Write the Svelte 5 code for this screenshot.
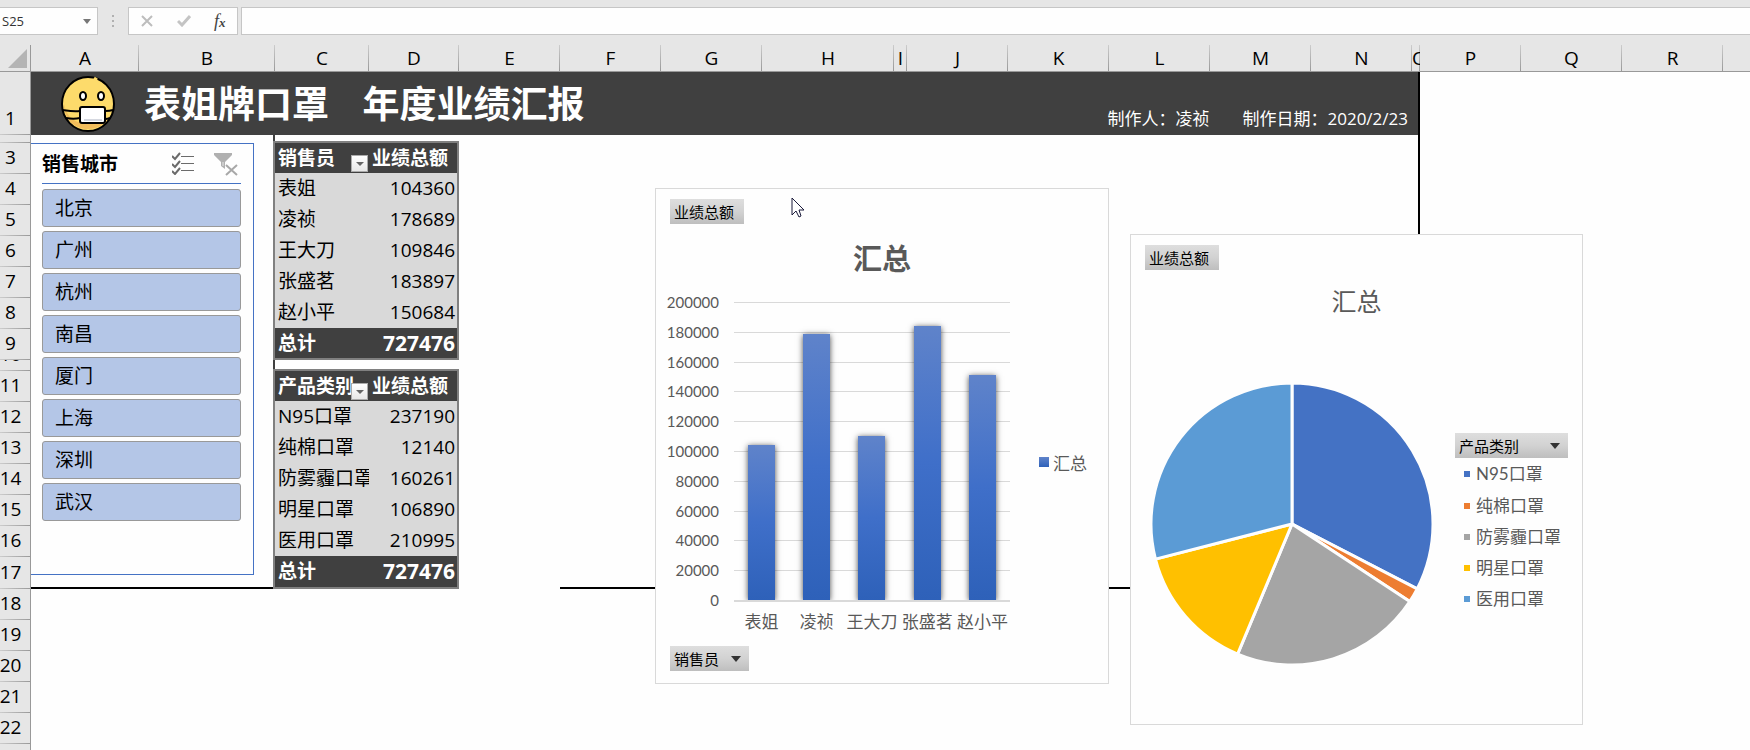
<script lang="ts">
  type Column = { name: string; width: string };
  type Row = { label: string; value: number };
  type Pivot = { id: string; field: string; rows: Row[] };

  const columns: Column[] = [
    { name: 'A', width: '108px' },
    { name: 'B', width: '136px' },
    { name: 'C', width: '94px' },
    { name: 'D', width: '90px' },
    { name: 'E', width: '101px' },
    { name: 'F', width: '101px' },
    { name: 'G', width: '101px' },
    { name: 'H', width: '132px' },
    { name: 'I', width: '13px' },
    { name: 'J', width: '101px' },
    { name: 'K', width: '101px' },
    { name: 'L', width: '101px' },
    { name: 'M', width: '101px' },
    { name: 'N', width: '101px' },
    { name: 'O', width: '8px' },
    { name: 'P', width: '101px' },
    { name: 'Q', width: '101px' },
    { name: 'R', width: '101px' },
    { name: '', width: 'minmax(0, 1fr)' }
  ];

  const rowHeights: Record<number, number> = { 1: 63, 2: 8, 10: 11, 17: 32 };
  const rowNumbers = Array.from({ length: 23 }, (_, i) => i + 1);

  const gridColumns = '31px ' + columns.map((c) => c.width).join(' ');
  const gridRows = '27px ' + rowNumbers.map((n) => `${rowHeights[n] ?? 31}px`).join(' ');

  const cities = ['北京', '广州', '杭州', '南昌', '厦门', '上海', '深圳', '武汉'];

  const sales: Row[] = [
    { label: '表姐', value: 104360 },
    { label: '凌祯', value: 178689 },
    { label: '王大刀', value: 109846 },
    { label: '张盛茗', value: 183897 },
    { label: '赵小平', value: 150684 }
  ];

  const products: Row[] = [
    { label: 'N95口罩', value: 237190 },
    { label: '纯棉口罩', value: 12140 },
    { label: '防雾霾口罩', value: 160261 },
    { label: '明星口罩', value: 106890 },
    { label: '医用口罩', value: 210995 }
  ];

  const pivots: Pivot[] = [
    { id: 'by-seller', field: '销售员', rows: sales },
    { id: 'by-product', field: '产品类别', rows: products }
  ];

  const axisMax = 200000;
  const ticks = Array.from({ length: 11 }, (_, i) => axisMax - i * 20000);

  const pieColors = ['#4472c4', '#ed7d31', '#a5a5a5', '#ffc000', '#5b9bd5'];

  let cell = $state('S25');
  let formula = $state('');
  let selected = $state<string[]>([...cities]);

  function total(rows: Row[]) {
    return rows.reduce((sum, r) => sum + r.value, 0);
  }

  function toggleCity(city: string) {
    selected = selected.includes(city) ? selected.filter((c) => c !== city) : [...selected, city];
  }

  function slices(rows: Row[], r: number) {
    const sum = total(rows);
    let start = 0;
    return rows.map((row, i) => {
      const end = start + (row.value / sum) * Math.PI * 2;
      const large = end - start > Math.PI ? 1 : 0;
      const d = `M0 0L${r * Math.sin(start)} ${-r * Math.cos(start)}A${r} ${r} 0 ${large} 1 ${r * Math.sin(end)} ${-r * Math.cos(end)}Z`;
      start = end;
      return { d, color: pieColors[i] };
    });
  }
</script>

<div class="app">
  <div class="formula-bar">
    <div class="name-box">
      <input type="text" aria-label="名称框" bind:value={cell} />
      <button aria-label="名称列表">
        <svg width="8" height="5" viewBox="0 0 8 5"><path d="M0 0h8L4 5z" fill="#777" /></svg>
      </button>
    </div>
    <svg class="grip" width="3" height="14" viewBox="0 0 3 14">
      <path d="M0 1h2v2H0zM0 6h2v2H0zM0 11h2v2H0z" fill="#b0b0b0" />
    </svg>
    <div class="formula-tools">
      <button aria-label="取消">
        <svg width="14" height="12" viewBox="0 0 14 12">
          <path d="M2 1l10 10M12 1L2 11" stroke="#bdbdbd" stroke-width="2" fill="none" />
        </svg>
      </button>
      <button aria-label="输入">
        <svg width="14" height="12" viewBox="0 0 14 12">
          <path d="M1 6l4 4 8-9" stroke="#c4c4c4" stroke-width="3" fill="none" />
        </svg>
      </button>
      <button class="fx" aria-label="插入函数"><i>f</i><sub>x</sub></button>
    </div>
    <input class="formula-input" type="text" aria-label="编辑栏" bind:value={formula} />
  </div>

  <div class="sheet" style="grid-template-columns: {gridColumns}; grid-template-rows: {gridRows}">
    <div class="corner">
      <svg width="19" height="19" viewBox="0 0 19 19"><path d="M19 0v19H0z" fill="#b4b4b4" /></svg>
    </div>
    {#each columns as col}
      <div class="col-head">{col.name}</div>
    {/each}
    {#each rowNumbers as n}
      <div class="row-head" style="grid-row: {n + 1}">{n === 2 || n === 23 ? '' : n}</div>
    {/each}

    <div class="pivot-edge"></div>
    <div class="bottom-edge left"></div>
    <div class="bottom-edge right"></div>

    <header class="banner">
      <svg class="logo" width="56" height="58" viewBox="0 0 56 58">
        <ellipse cx="28" cy="29" rx="26" ry="27" fill="#fddb6b" stroke="#000" stroke-width="2" />
        <path d="M4 29c0 15 10 25 24 25 9 0 17-4 21-12-5 5-11 7-19 7C15 49 7 43 4 29z" fill="#f2bd5c" />
        <path d="M3 35c6 1 11 2 17 1M53 35c-3 1-4 1-8 1M6 43c6 1 9 1 14 0M50 43c-2 1-3 1-5 1" stroke="#000" stroke-width="2" fill="none" />
        <rect x="20" y="32" width="25" height="16" rx="2" fill="#fff" stroke="#000" stroke-width="2" />
        <path d="M24 45h18" stroke="#d5d8e0" stroke-width="2" />
        <ellipse cx="23" cy="21" rx="3" ry="4" fill="#fff" stroke="#000" stroke-width="2" />
        <ellipse cx="41" cy="21" rx="3" ry="4" fill="#fff" stroke="#000" stroke-width="2" />
        <path d="M34 3l3 2" stroke="#fddb6b" stroke-width="3" />
      </svg>
      <h1>表姐牌口罩    年度业绩汇报</h1>
      <p><span>制作人：凌祯</span><span>制作日期：2020/2/23</span></p>
    </header>

    {#each pivots as pivot}
      <div class="pivot {pivot.id}">
        <table>
          <thead>
            <tr>
              <th scope="col">
                {pivot.field}
                <button class="filter" aria-label="筛选{pivot.field}">
                  <svg width="8" height="4" viewBox="0 0 8 4"><path d="M0 0h8L4 4z" fill="#666" /></svg>
                </button>
              </th>
              <th scope="col">业绩总额</th>
            </tr>
          </thead>
          <tbody>
            {#each pivot.rows as row}
              <tr>
                <td>{row.label}</td>
                <td class="num">{row.value}</td>
              </tr>
            {/each}
          </tbody>
          <tfoot>
            <tr>
              <td>总计</td>
              <td class="num">{total(pivot.rows)}</td>
            </tr>
          </tfoot>
        </table>
      </div>
    {/each}

    <section class="slicer">
      <div class="slicer-head">
        <h2>销售城市</h2>
        <button aria-label="多选">
          <svg width="22" height="23" viewBox="0 0 22 23" fill="none">
            <path d="M0 4l3 3 5-6M0 12l3 3 5-6M0 19l3 3 5-6" stroke="#6b6b6b" stroke-width="2" />
            <path d="M9 4.500h13M9 11.500h13M9 18.500h13" stroke="#6b6b6b" />
          </svg>
        </button>
        <button aria-label="清除筛选器" onclick={() => (selected = [...cities])}>
          <svg width="24" height="24" viewBox="0 0 24 24">
            <path d="M0 1h18v2l-7 7v7l-4-3v-4L0 3z" fill="#b0b0b0" />
            <path d="M9 10v4" stroke="#e8e8e8" stroke-width="1" />
            <path d="M12 13l11 10M23 13L12 23" stroke="#a8a8a8" stroke-width="2" />
          </svg>
        </button>
      </div>
      <div class="slicer-items">
        {#each cities as city}
          <button
            class:off={!selected.includes(city)}
            aria-pressed={selected.includes(city)}
            onclick={() => toggleCity(city)}
          >{city}</button>
        {/each}
      </div>
    </section>

    <section class="chart bar-chart">
      <button class="field">业绩总额</button>
      <h2>汇总</h2>
      <div class="bar-body">
        <div class="y-axis">
          {#each ticks as tick}
            <span>{tick}</span>
          {/each}
        </div>
        <div class="plot">
          <div class="plot-area">
            <div class="gridlines">
              {#each ticks as _}
                <div></div>
              {/each}
            </div>
            <div class="bars">
              {#each sales as s}
                <div class="bar" style="height: {(s.value / axisMax) * 100}%"></div>
              {/each}
            </div>
          </div>
          <div class="x-axis">
            {#each sales as s}
              <span>{s.label}</span>
            {/each}
          </div>
        </div>
        <div class="legend"><span class="swatch"></span>汇总</div>
      </div>
      <button class="field">
        销售员
        <svg width="10" height="6" viewBox="0 0 10 6"><path d="M0 0h10L5 6z" fill="#333" /></svg>
      </button>
    </section>

    <section class="chart pie-chart">
      <button class="field">业绩总额</button>
      <h2>汇总</h2>
      <div class="pie-body">
        <svg width="282" height="282" viewBox="-141 -141 282 282">
          {#each slices(products, 141) as slice}
            <path d={slice.d} fill={slice.color} stroke="#fefefe" stroke-width="3" stroke-linejoin="round" />
          {/each}
        </svg>
        <div class="pie-legend">
          <button class="field">
            产品类别
            <svg width="10" height="6" viewBox="0 0 10 6"><path d="M0 0h10L5 6z" fill="#333" /></svg>
          </button>
          <ul>
            {#each products as p, i}
              <li><span style="background: {pieColors[i]}"></span>{p.label}</li>
            {/each}
          </ul>
        </div>
      </div>
    </section>

    <svg class="pointer" width="14" height="21" viewBox="0 0 14 21">
      <path d="M1 1v17l4-4 3 6 2-1-2-6h5z" fill="#fff" stroke="#1a1a3a" />
    </svg>
  </div>
</div>

<style>
:global(body) {
  margin: 0;
  background: #fefefe;
}

.app {
  height: 100vh;
  overflow: hidden;
  display: flex;
  flex-direction: column;
  background: #fefefe;
  color: #000;
  font-family: 'Open Sans', 'Noto Sans CJK SC', sans-serif;
  font-size: 19px;
}

button,
input {
  font: inherit;
  color: inherit;
  margin: 0;
  padding: 0;
  border: none;
  background: none;
}
button { cursor: pointer; }
svg { display: block; flex: none; }
h1, h2, p, ul { margin: 0; padding: 0; }

/* formula bar */
.formula-bar {
  display: flex;
  align-items: center;
  box-sizing: border-box;
  flex: none;
  height: 45px;
  padding: 7px 0 10px;
  background: #e6e6e6;
}
.name-box,
.formula-tools,
.formula-input {
  box-sizing: border-box;
  height: 28px;
  border: 1px solid #c6c6c6;
  background: #fefefe;
}
.name-box {
  display: flex;
  align-items: center;
  width: 98px;
  border-left: none;
  font-size: 13px;
}
.name-box input {
  flex: 1;
  min-width: 0;
  padding-left: 2px;
  color: #333;
}
.name-box button { padding: 6px; }
.grip { margin: 0 13px 0 14px; }
.formula-tools {
  display: flex;
  align-items: center;
  justify-content: space-around;
  width: 110px;
  margin-right: 3px;
}
.fx {
  display: flex;
  align-items: baseline;
  font-family: 'Liberation Serif', serif;
  font-size: 18px;
  line-height: 20px;
  color: #444;
}
.fx sub {
  font-size: 13px;
  font-style: italic;
  font-weight: bold;
  line-height: 12px;
  vertical-align: baseline;
}
.formula-input {
  flex: 1;
  padding: 0 6px;
  border-right: none;
  font-size: 14px;
}

/* sheet grid */
.sheet {
  position: relative;
  display: grid;
  flex: 1;
  min-height: 0;
}
.corner,
.col-head,
.row-head {
  box-sizing: border-box;
  overflow: hidden;
  background: #e6e6e6;
}
.corner {
  display: flex;
  align-items: flex-end;
  justify-content: flex-end;
  padding: 0 3px 3px 0;
  border-right: 1px solid #999;
  border-bottom: 1px solid #999;
}
.col-head {
  display: flex;
  align-items: center;
  justify-content: safe center;
  border-bottom: 1px solid #999;
  background: linear-gradient(#ccc, #999) right / 1px 100% no-repeat #e6e6e6;
  line-height: 26px;
}
.col-head:nth-child(20) { background: #e6e6e6; }
.row-head {
  grid-column: 1;
  display: flex;
  align-items: flex-end;
  justify-content: center;
  padding: 0 9px 1px 0;
  border-right: 1px solid #999;
  background: linear-gradient(to right, #ccc, #999) bottom / 100% 1px no-repeat #e6e6e6;
  line-height: 31px;
}

.pivot-edge {
  grid-area: 3 / 3 / 19 / 4;
  border-right: 2px solid #404040;
}
.bottom-edge { border-bottom: 2px solid #000; }
.bottom-edge.left { grid-area: 18 / 2 / 19 / 4; }
.bottom-edge.right {
  grid-area: 2 / 7 / 19 / 17;
  border-right: 2px solid #000;
}

.banner {
  grid-area: 2 / 2 / 3 / 17;
  display: flex;
  align-items: center;
  margin-right: 2px;
  padding: 0 10px 0 29px;
  background: #404040;
  color: #fff;
}
.banner h1 {
  flex: 1;
  padding: 0 0 3px 28px;
  font-family: 'Noto Sans CJK SC', sans-serif;
  font-size: 37px;
  font-weight: bold;
  line-height: 60px;
  white-space: pre;
}
.banner p {
  display: flex;
  align-self: flex-end;
  gap: 33px;
  padding-bottom: 4px;
  font-size: 17px;
  line-height: 24px;
}

/* pivot tables */
.pivot {
  margin: -2px 0 0 -2px;
  border: 2px solid #808080;
  background: #404040;
  overflow: hidden;
}
.pivot.by-seller { grid-area: 4 / 4 / 11 / 6; }
.pivot.by-product { grid-area: 12 / 4 / 19 / 6; }
table {
  width: 100%;
  table-layout: fixed;
  border-collapse: collapse;
  line-height: 30px;
}
th,
td {
  height: 31px;
  box-sizing: border-box;
  padding: 0 0 1px 3px;
  overflow: hidden;
  text-align: left;
  white-space: nowrap;
}
th {
  height: 30px;
  padding-bottom: 0;
}
th:first-child {
  position: relative;
  width: 94px;
}
th,
tfoot td {
  background: #404040;
  color: #fff;
  font-weight: bold;
}
tbody td { background: #d9d9d9; }
.num {
  padding: 0 2px 1px 0;
  text-align: right;
}
tfoot .num { font-size: 21px; }
.filter {
  position: absolute;
  right: 1px;
  bottom: 1px;
  display: flex;
  align-items: center;
  justify-content: center;
  box-sizing: border-box;
  width: 17px;
  height: 17px;
  border: 1px solid #ababab;
  background: linear-gradient(#fff, #e8e8e8);
}

/* slicer */
.slicer {
  position: absolute;
  left: 31px;
  top: 98px;
  box-sizing: border-box;
  width: 223px;
  height: 432px;
  padding: 0 12px 0 11px;
  border: 1px solid #4472c4;
  border-left: none;
  background: #fefefe;
}
.slicer-head {
  display: flex;
  align-items: center;
  gap: 20px;
  height: 39px;
  padding-right: 3px;
  border-bottom: 1px solid #4472c4;
}
.slicer-head h2 {
  flex: 1;
  font-size: 19px;
  font-weight: bold;
  line-height: 30px;
}
.slicer-items {
  display: flex;
  flex-direction: column;
  gap: 4px;
  padding-top: 5px;
}
.slicer-items button {
  height: 38px;
  padding-left: 12px;
  border: 1px solid #999;
  border-radius: 3px;
  background: #b4c6e7;
  text-align: left;
  line-height: 30px;
}
.slicer-items .off { background: #fff; }

/* charts */
.chart {
  position: absolute;
  box-sizing: border-box;
  padding: 10px 14px;
  border: 1px solid #d9d9d9;
  background: #fefefe;
  color: #595959;
  font-family: Lato, 'Noto Sans CJK SC', sans-serif;
  font-size: 17px;
}
.chart h2 { text-align: center; }
.field {
  display: flex;
  align-items: center;
  gap: 12px;
  height: 25px;
  padding: 0 8px 0 4px;
  background: linear-gradient(#dedede, #d2d2d2 50%, #bebebe);
  color: #000;
  font-size: 15px;
  line-height: 24px;
}
.chart > .field:first-child { padding-right: 10px; }

.bar-chart {
  left: 655px;
  top: 143px;
  width: 454px;
  height: 496px;
}
.bar-chart h2 {
  margin-top: 17px;
  font-size: 29px;
  font-weight: bold;
  line-height: 36px;
}
.bar-body {
  display: flex;
  margin: 15px -4px 14px;
}
.y-axis {
  display: flex;
  flex-direction: column;
  justify-content: space-between;
  width: 53px;
  height: 318px;
  font-size: 15px;
  line-height: 20px;
  text-align: right;
}
.plot {
  flex: 1;
  margin: 10px 29px 0 15px;
}
.plot-area {
  position: relative;
  height: 298px;
}
.gridlines {
  display: flex;
  flex-direction: column;
  justify-content: space-between;
  height: 300px;
}
.gridlines div {
  height: 1px;
  background: #d9d9d9;
}
.gridlines div:last-child { height: 2px; }
.bars {
  position: absolute;
  inset: 0;
  display: flex;
  align-items: flex-end;
  justify-content: space-around;
  clip-path: inset(-8px 0 0 0);
}
.bar {
  width: 27px;
  background: linear-gradient(#5f83ca, #3f6fc9 50%, #2e61b9);
  box-shadow: 0 1px 6px rgba(0, 0, 0, 0.7);
}
.x-axis {
  display: flex;
  margin-top: 12px;
  line-height: 20px;
}
.x-axis span {
  flex: 1 0 0;
  text-align: center;
  white-space: nowrap;
}
.legend {
  display: flex;
  align-items: center;
  gap: 4px;
  width: 59px;
}
.swatch {
  width: 10px;
  height: 10px;
  background: linear-gradient(#5f83ca, #2e61b9);
}

.pie-chart {
  left: 1130px;
  top: 189px;
  width: 453px;
  height: 491px;
}
.pie-chart h2 {
  margin-top: 15px;
  font-size: 25px;
  font-weight: normal;
  line-height: 32px;
}
.pie-body {
  display: flex;
  gap: 22px;
  margin-top: 66px;
  padding-left: 6px;
}
.pie-legend {
  flex: 1;
  padding-top: 50px;
}
.pie-legend .field {
  justify-content: space-between;
  width: 100%;
}
.pie-legend ul {
  list-style: none;
  padding-left: 9px;
}
.pie-legend li {
  display: flex;
  align-items: center;
  gap: 6px;
  height: 31px;
  line-height: 30px;
  white-space: nowrap;
}
.pie-legend li:first-child { height: 32px; }
.pie-legend li span {
  width: 6px;
  height: 6px;
}

.pointer {
  position: absolute;
  left: 791px;
  top: 152px;
}
</style>
